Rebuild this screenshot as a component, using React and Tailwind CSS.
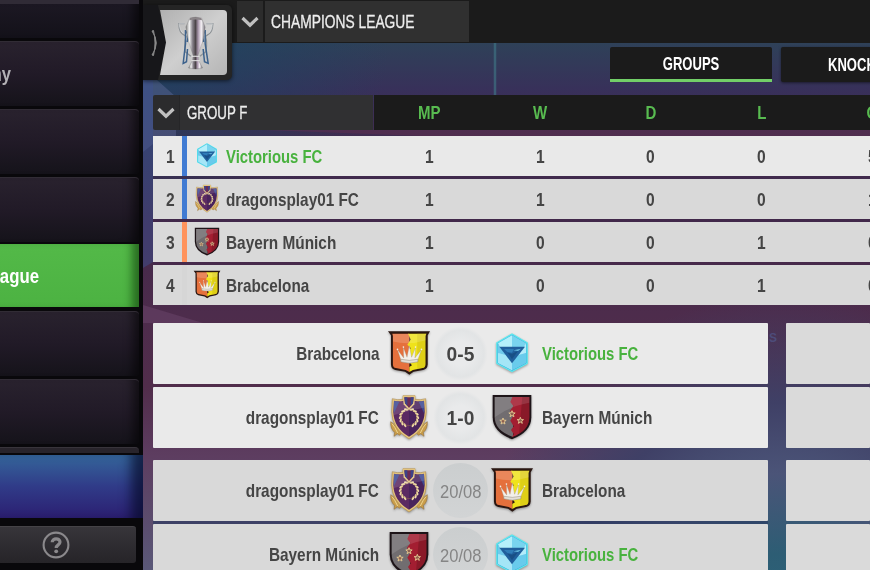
import { clsx } from 'clsx';

const standings = [
  { pos: 1, crest: 'gem', team: 'Victorious FC', bar: 'bg-[#417bd3]', stats: [1, 1, 0, 0, 5], own: true },
  { pos: 2, crest: 'laurel', team: 'dragonsplay01 FC', bar: 'bg-[#417bd3]', stats: [1, 1, 0, 0, 1] },
  { pos: 3, crest: 'stars', team: 'Bayern Múnich', bar: 'bg-[#ff935c]', stats: [1, 0, 0, 1, 0] },
  { pos: 4, crest: 'crown', team: 'Brabcelona', bar: 'bg-[#d6d6d6]', stats: [1, 0, 0, 1, 0] },
];

const rounds = [
  [
    { home: 'Brabcelona', homeCrest: 'crown', score: '0-5', away: 'Victorious FC', awayCrest: 'gem' },
    { home: 'dragonsplay01 FC', homeCrest: 'laurel', score: '1-0', away: 'Bayern Múnich', awayCrest: 'stars' },
  ],
  [
    { home: 'dragonsplay01 FC', homeCrest: 'laurel', date: '20/08', away: 'Brabcelona', awayCrest: 'crown' },
    { home: 'Bayern Múnich', homeCrest: 'stars', date: '20/08', away: 'Victorious FC', awayCrest: 'gem' },
  ],
];

// condensed look, tuned per name
const fits = {
  'Victorious FC': 'scale-x-[0.782]',
  'dragonsplay01 FC': 'scale-x-[0.807]',
  'Bayern Múnich': 'scale-x-[0.81]',
  Brabcelona: 'scale-x-[0.805]',
};

function CrownCrest({ className }) {
  return (
    <svg viewBox="20 28 134 138" className={className}>
      <path d="M23 31H151L144 43V132Q143 146 130 149L101 154 88 163 75 154 45 149Q33 146 32 132V43Z" fill="#2a1712" />
      <path d="M36 38H88V155L77 149 47 143Q38 141 38 131V45Z" fill="#e5703c" />
      <path d="M84 38H140L137 45V131Q137 141 128 143L99 149 88 155V140L96 134 86 122 94 108 84 96 92 82 82 72 92 56Z" fill="#efe21a" />
      <path d="M112 38H140L137 45V131Q137 141 128 143L112 146Z" fill="#c9b512" opacity=".4" />
      <path d="M38 39H138V58Q88 74 38 62Z" fill="#fff" opacity=".16" />
      <path d="M63 120 52 87 71 112 70 80 81 110 88 75 95 110 107 80 105 112 125 87 113 120Q88 127 63 120Z" fill="#f3f0ea" stroke="#a39a88" strokeWidth="1" />
      <path d="M62 116Q88 123 114 116V124Q88 132 62 124Z" fill="#e4e0d8" stroke="#8f8676" strokeWidth="1.5" />
      <circle cx="52" cy="86" r="2.5" fill="#f3f0ea" />
      <circle cx="70" cy="79" r="2.5" fill="#f3f0ea" />
      <circle cx="107" cy="79" r="2.5" fill="#f3f0ea" />
      <circle cx="125" cy="86" r="2.5" fill="#f3f0ea" />
    </svg>
  );
}

const leaves = [20, 42, 64, 86, 108, 130, 152, 208, 230, 252, 274, 296, 318, 340];

function LaurelCrest({ className }) {
  return (
    <svg viewBox="26 221 126 138" className={className}>
      <path d="M34 304Q42 308 49 318L66 340 59 345 54 340 44 348 46 336Q33 326 34 304ZM144 304Q136 308 129 318L112 340 119 345 124 340 134 348 132 336Q145 326 144 304Z" fill="#c99d4b" stroke="#8d6730" strokeWidth="1.5" />
      <path d="M38 310Q46 318 55 338M140 310Q132 318 123 338" fill="none" stroke="#ecd491" strokeWidth="3" />
      <path d="M71 226H107V237Q124 240 139 235L141 274Q140 326 89 356 38 326 37 274L39 235Q54 240 71 237Z" fill="#e3c47d" stroke="#a9803e" strokeWidth="1.5" />
      <path d="M73 241Q56 245 44 241L42 274Q43 322 89 349V260Z" fill="#5b2a62" />
      <path d="M105 241Q122 245 134 241L136 274Q135 322 89 349V260Z" fill="#49235c" />
      <path d="M44 242 60 244 43 280ZM134 242 118 244 135 280Z" fill="#3d4a94" />
      <g fill="#f0dca6">
        {leaves.map((angle) => (
          <ellipse key={angle} cx="89" cy="266" rx="6.5" ry="3.2" transform={`rotate(${angle} 89 292) rotate(${angle < 180 ? -32 : 32} 89 266)`} />
        ))}
      </g>
      <circle cx="89" cy="292" r="24" fill="none" stroke="#a67f48" strokeWidth="1.2" />
      <path d="M70 226H108L105 252 89 270 73 252Z" fill="#e3c47d" />
      <path d="M75 231H103L101 249 89 263 77 249Z" fill="#6b2c55" />
      <path d="M75 231H84V257L77 249ZM94 231H103L101 249 94 257Z" fill="#3d4388" />
      <path d="M44 284Q90 270 134 262V242L105 243 89 264 73 243 44 242Z" fill="#fff" opacity=".13" />
    </svg>
  );
}

function StarsCrest({ className }) {
  const star = 'M0-10 2.6-3.4 9.5-3.1 4.1 1.3 5.9 8.1 0 4.2-5.9 8.1-4.1 1.3-9.5-3.1-2.6-3.4Z';
  return (
    <svg viewBox="334 220 126 138" className={className}>
      <path d="M339 223H455V290Q455 334 397 356 339 334 339 290Z" fill="#1d1418" />
      <path d="M345 229H400V349Q345 330 345 290Z" fill="#716d70" />
      <path d="M398 229H449V290Q449 330 397 350L402 340 394 328 402 317 392 300 400 286 391 270 401 256 392 244Z" fill="#a31e31" />
      <path d="M428 229H449V290Q449 322 418 340Z" fill="#741521" opacity=".55" />
      <path d="M345 229H449V246Q390 256 345 290Z" fill="#fff" opacity=".12" />
      {[[370, 302], [397, 280], [422, 300]].map(([x, y]) => (
        <path key={x} d={star} transform={`translate(${x} ${y})`} fill="#8b5c4c" stroke="#ead096" strokeWidth="2.6" />
      ))}
    </svg>
  );
}

function GemCrest({ className }) {
  return (
    <svg viewBox="334 29 124 138" className={className}>
      <path d="M396 42 441 68V129L396 153 351 129V68Z" fill="#77dff2" stroke="#5be7ee" strokeWidth="5" strokeLinejoin="round" />
      <path d="M396 45 438 69V128L396 150 354 128V69Z" fill="#8ddcf4" stroke="#3aa6d8" strokeWidth="2.5" />
      <path d="M396 45 354 69 360 81H396Z" fill="#b5f0fb" />
      <path d="M396 45 438 69 431 81H396Z" fill="#79d4ef" />
      <path d="M354 69 360 81 378 105 354 98Z" fill="#6fc9eb" />
      <path d="M354 98 378 105 396 128V150L354 128Z" fill="#a4e6f7" />
      <path d="M438 69 431 81 414 105 438 98Z" fill="#b4ecfa" />
      <path d="M438 98 414 105 396 128V150L438 128Z" fill="#69cbec" />
      <path d="M358 79H435L396 129Z" fill="#205f9c" />
      <path d="M372 86H402L396 97 382 95Z" fill="#2f7cb8" />
      <path d="M383 97 396 117 414 92 396 100Z" fill="#184f86" />
      <path d="M400 90 423 85 414 92Z" fill="#67bde0" />
    </svg>
  );
}

const crests = { crown: CrownCrest, laurel: LaurelCrest, stars: StarsCrest, gem: GemCrest };

function Crest({ name, small }) {
  const Shape = crests[name];
  return <Shape className={small ? 'mb-px h-[29px] w-[28px] shrink-0' : 'mb-[2px] h-[46px] w-[44px] shrink-0 drop-shadow-[0_1px_1px_rgba(0,0,0,0.35)]'} />;
}

function Chevron() {
  return (
    <svg viewBox="0 0 18 12" className="h-3 w-[18px]">
      <path d="M1.5 2 9 9.2 16.5 2" fill="none" stroke="#c0c0c0" strokeWidth="3.2" />
    </svg>
  );
}

function Trophy() {
  return (
    <svg viewBox="110 45 116 162" className="h-[54px] w-[39px]">
      <defs>
        <linearGradient id="silver" x1="0" x2="1">
          <stop offset="0" stopColor="#777" />
          <stop offset=".18" stopColor="#f4f4f4" />
          <stop offset=".34" stopColor="#8a858d" />
          <stop offset=".5" stopColor="#4d464a" />
          <stop offset=".64" stopColor="#a997ac" />
          <stop offset=".8" stopColor="#f5f1f5" />
          <stop offset="1" stopColor="#737078" />
        </linearGradient>
      </defs>
      <path d="M135 68H118Q119 92 129 99L140 106Q134 125 137 152L154 166M201 68H220Q219 92 208 99L198 106Q204 125 199 152L181 166" fill="none" stroke="#8d9296" strokeWidth="4" />
      <path d="M135 68H119Q121 90 131 97M201 68H219Q217 90 207 97" fill="none" stroke="#e9ecee" strokeWidth="1.5" />
      <path d="M138 87V128L131 187 141 182 144 144M197 87V128L206 187 195 182 191 144M137 89Q150 96 143 123M198 89Q186 96 192 123" fill="none" stroke="#3d628c" strokeWidth="4.5" />
      <path d="M151 51Q168 46 186 51L197 78Q194 118 175 164H161Q144 118 139 78Z" fill="url(#silver)" stroke="#777" />
      <path d="M152 51Q168 46 185 51L188 58Q168 53 149 58Z" fill="#8b8588" />
      <path d="M161 164H176L177 178 189 201Q168 207 147 201L159 178Z" fill="url(#silver)" stroke="#666" />
      <path d="M157 166H180M156 179H181" stroke="#e4e4e4" strokeWidth="3" />
    </svg>
  );
}

function MenuRow({ label }) {
  return (
    <div className="mr-1 flex h-[65px] shrink-0 items-center rounded-r-sm border-t border-[#312c35] bg-linear-to-b from-[#29222e] via-[#211a27] to-[#15131a] shadow-[inset_-14px_0_10px_-8px_rgba(0,0,0,0.55)]">
      {label && (
        <div className="flex w-[11px] justify-end">
          <span className="origin-right scale-x-[0.83] text-[20px] font-bold text-[#b3b1b5]">{label}</span>
        </div>
      )}
    </div>
  );
}

function Sidebar() {
  return (
    <aside className="flex h-full w-[143px] shrink-0 flex-col overflow-hidden bg-[#09080b]">
      <div className="mr-1 h-1 shrink-0 bg-[#302b36]" />
      <div className="mr-1 mb-[3px] h-[34px] shrink-0 bg-linear-to-b from-[#1c1823] to-[#131119] shadow-[inset_-14px_0_10px_-8px_rgba(0,0,0,0.55)]" />
      <div className="flex shrink-0 flex-col gap-[3px]">
        <MenuRow label="Academy" />
        <MenuRow />
        <MenuRow />
      </div>
      <div className="mt-[2px] mr-1 flex h-[63px] shrink-0 items-center bg-linear-to-b from-[#53b948] to-[#4cb242] shadow-[inset_-12px_0_8px_-5px_rgba(15,60,10,0.6)]">
        <div className="flex w-[39px] justify-end">
          <span className="origin-right scale-x-[0.84] text-[20px] font-bold text-white">League</span>
        </div>
      </div>
      <div className="mt-[4px] flex shrink-0 flex-col gap-[3px]">
        <MenuRow />
        <MenuRow />
      </div>
      <div className="mt-[3px] mr-1 h-[6px] shrink-0 rounded-tr-sm border-t border-[#38343b] bg-[#28242b]" />
      <div className="mt-[2px] h-[63px] shrink-0 bg-linear-to-b from-[#34659a] via-[#303b88] to-[#2b1e71] shadow-[inset_-18px_0_12px_-6px_rgba(5,10,40,0.7)]" />
      <div className="mt-[8px] mr-[7px] flex h-[37px] shrink-0 items-center rounded-r-[3px] border-t border-[#454347] bg-linear-to-b from-[#37353a] to-[#262428] pl-[42px]">
        <svg viewBox="0 0 28 28" className="size-7">
          <circle cx="14" cy="14" r="12.4" fill="none" stroke="#8b898c" strokeWidth="2.1" />
          <path d="M10.2 11.3C10.2 6.8 18 6.7 18 11.1 18 14 14.2 13.8 14.2 17" fill="none" stroke="#8b898c" strokeWidth="3.2" />
          <circle cx="14.2" cy="20.3" r="1.9" fill="#8b898c" />
        </svg>
      </div>
    </aside>
  );
}

function Backdrop() {
  return (
    <svg viewBox="0 0 727 570" className="absolute inset-0 -z-10 h-full w-full">
      <path d="M0 80H14L33 97V136H20L0 152Z" fill="#6f78aa" opacity=".35" />
      <path d="M0 80H10V262L0 268Z" fill="#3d4f8e" opacity=".5" />
      <path d="M0 305 60 323H0Z" fill="#8b608a" opacity=".25" />
      <path d="M352 42V95" stroke="#3f7585" strokeWidth="2.5" opacity=".65" />
      <path d="M120 130H727V136H280Z" fill="#69304e" opacity=".4" />
      <path d="M10 520H625V525H10Z" fill="#2a3a60" opacity=".6" />
    </svg>
  );
}

function TopBar() {
  return (
    <header className="relative flex h-[43px] shrink-0 bg-[#1b1b1b] pt-px pl-[94px]">
      <div className="flex h-[41px] w-[26px] items-center justify-center bg-[#2c2c2c]">
        <Chevron />
      </div>
      <div className="ml-[2px] flex h-[41px] w-[204px] items-center bg-[#303030] pl-[6px]">
        <span className="origin-left scale-x-[0.727] text-[19px] whitespace-nowrap text-[#eee] [-webkit-text-stroke:0.3px_#eee]">CHAMPIONS LEAGUE</span>
      </div>
      {/* competition badge hangs over the bar */}
      <div className="absolute top-[5px] -left-[3px] z-10 flex h-[75px] w-[92px] items-center rounded-[5px] bg-[#252525] pl-5 shadow-[0_1px_4px_rgba(0,0,0,0.6)]">
        <svg viewBox="0 0 26 75" className="absolute top-0 left-0 h-[75px] w-[26px]">
          <path d="M0 0H18L26 37 18 75H0Z" fill="#17171a" />
        </svg>
        <div className="flex h-[65px] w-[67px] items-center justify-center rounded-r-[4px] bg-linear-to-br from-[#b0b0b0] via-[#cfcfcf] to-[#b5b5b5] pl-1 [clip-path:polygon(0_0,100%_0,100%_100%,0_100%,6px_50%)]">
          <Trophy />
        </div>
        <svg viewBox="0 0 8 26" className="absolute top-[25px] left-[11px] h-[26px] w-2">
          <path d="M1 1Q9.5 13 1 25L2.5 25.5Q4 19 4 13 4 7 2.5 .5Z" fill="#8a8a8a" stroke="#8a8a8a" />
        </svg>
      </div>
    </header>
  );
}

function Tabs() {
  return (
    <div className="mt-[4px] flex h-[35px] shrink-0 gap-[9px] pl-[467px]">
      <div className="flex w-[162px] shrink-0 items-center justify-center rounded-t-[2px] border-b-3 border-[#72cf68] bg-[#1b1b1b] pt-[2px]">
        <span className="scale-x-[0.725] text-[18px] font-bold text-white">GROUPS</span>
      </div>
      <div className="flex w-[162px] shrink-0 items-center rounded-[2px] bg-[#1b1b1b] pl-[47px] shadow-[0_1px_3px_rgba(0,0,0,0.5)]">
        <span className="origin-left scale-x-[0.725] text-[18px] font-bold text-white">KNOCKOUT</span>
      </div>
    </div>
  );
}

function Standings() {
  return (
    <section className="mt-[13px] w-[775px] shrink-0">
      <div className="flex h-[35px]">
        <div className="flex w-[26px] items-center justify-center rounded-l-[2px] bg-[#2b2b2d]">
          <Chevron />
        </div>
        <div className="flex w-[194px] items-center border-l border-[#262628] bg-[#303032] pl-[7px]">
          <span className="origin-left scale-x-[0.7] text-[19px] whitespace-nowrap text-[#eee] [-webkit-text-stroke:0.3px_#eee]">GROUP F</span>
        </div>
        <div className="ml-px flex flex-1 items-center bg-[#1b1b1b]">
          {['MP', 'W', 'D', 'L', 'G'].map((head) => (
            <div key={head} className="flex w-[110.7px] shrink-0 justify-center">
              <span className="scale-x-[0.79] text-[19px] font-bold text-[#58bb50]">{head}</span>
            </div>
          ))}
        </div>
      </div>
      <div className="mt-[6px] flex flex-col gap-[3px]">
        {standings.map((row) => (
          <div key={row.pos} className={clsx('flex h-10 items-center', row.own ? 'bg-[#e9e9e9]' : 'bg-[#d9d9d9]')}>
            <div className="flex w-[29px] justify-end pr-[7px]">
              <span className="origin-right scale-x-[0.82] text-[19px] font-bold text-[#454545]">{row.pos}</span>
            </div>
            <div className={clsx('h-full w-[5px]', row.bar)} />
            <div className="flex w-[187px] items-center gap-[5px] pl-[6px]">
              <Crest name={row.crest} small />
              <TeamName name={row.team} align="origin-left" />
            </div>
            {row.stats.map((value, i) => (
              <div key={i} className="flex w-[110.7px] shrink-0 justify-center">
                <span className="scale-x-[0.82] text-[19px] font-bold text-[#454545]">{value}</span>
              </div>
            ))}
          </div>
        ))}
      </div>
    </section>
  );
}

function TeamName({ name, align }) {
  return (
    <span
      className={clsx(
        'text-[19px] font-bold whitespace-nowrap',
        fits[name],
        align,
        name === 'Victorious FC' ? 'text-[#48b23e]' : 'text-[#454545]'
      )}
    >
      {name}
    </span>
  );
}

function Match({ match }) {
  return (
    <div className={clsx('flex h-[61px] items-center rounded-[1px]', match.score ? 'bg-[#eaeaea]' : 'bg-[#d9d9d9]')}>
      <div className="flex w-[226px] justify-end">
        <TeamName name={match.home} align="origin-right" />
      </div>
      <div className="ml-[6px] flex w-12 justify-center">
        <Crest name={match.homeCrest} />
      </div>
      {match.score ? (
        <div className="flex size-[55px] items-center justify-center rounded-full bg-[radial-gradient(circle,#e9eaeb_30%,#e2e4e5_60%,#eaeaea_70%)]">
          <span className="scale-x-[0.96] text-[20px] font-bold text-[#454545]">{match.score}</span>
        </div>
      ) : (
        <div className="flex size-[55px] items-center justify-center rounded-full bg-linear-to-b from-[#cbcecf] to-[#d2d4d5]">
          <span className="scale-x-[0.87] pt-px text-[19px] text-[#858585]">{match.date}</span>
        </div>
      )}
      <div className="mr-[6px] flex w-12 justify-center">
        <Crest name={match.awayCrest} />
      </div>
      <TeamName name={match.away} align="origin-left" />
    </div>
  );
}

export default function App() {
  return (
    <div className="flex h-[570px] w-[870px] overflow-hidden font-['Liberation_Sans',Arial,sans-serif] leading-none">
      <Sidebar />
      <main className="relative isolate flex h-full min-w-0 flex-1 flex-col overflow-hidden bg-[radial-gradient(circle_at_88%_108%,#2b647a_0%,#2d5d74_7%,#4b5478_16%,#3f4066_24%,transparent_36%),radial-gradient(ellipse_at_0%_8%,#1f4260_0%,transparent_24%),linear-gradient(to_bottom,#2e4258_7%,#38305a_16%,#402c50_24%,#41284a_38%,#4d2c4c_55%,#512d4b_68%,#5d3d60_80%,#5a5878_100%)]">
        <Backdrop />
        <TopBar />
        <Tabs />
        <div className="flex flex-col pl-[10px]">
          <Standings />
          <div className="mt-[18px] flex shrink-0 gap-[18px]">
            <div className="flex w-[615px] shrink-0 flex-col gap-3">
              {rounds.map((round, i) => (
                <div key={i} className="flex flex-col gap-[3px]">
                  {round.map((match) => (
                    <Match key={match.home} match={match} />
                  ))}
                </div>
              ))}
            </div>
            <div className="flex w-[84px] shrink-0 flex-col gap-3">
              {rounds.map((round, i) => (
                <div key={i} className="flex flex-col gap-[3px]">
                  <div className="h-[61px] rounded-[1px] bg-[#dadada]" />
                  <div className="h-[61px] rounded-[1px] bg-[#dadada]" />
                </div>
              ))}
            </div>
          </div>
        </div>
        <span className="absolute top-[332px] left-[626px] text-[12px] font-bold text-[#4d4c7a]">S</span>
      </main>
    </div>
  );
}
